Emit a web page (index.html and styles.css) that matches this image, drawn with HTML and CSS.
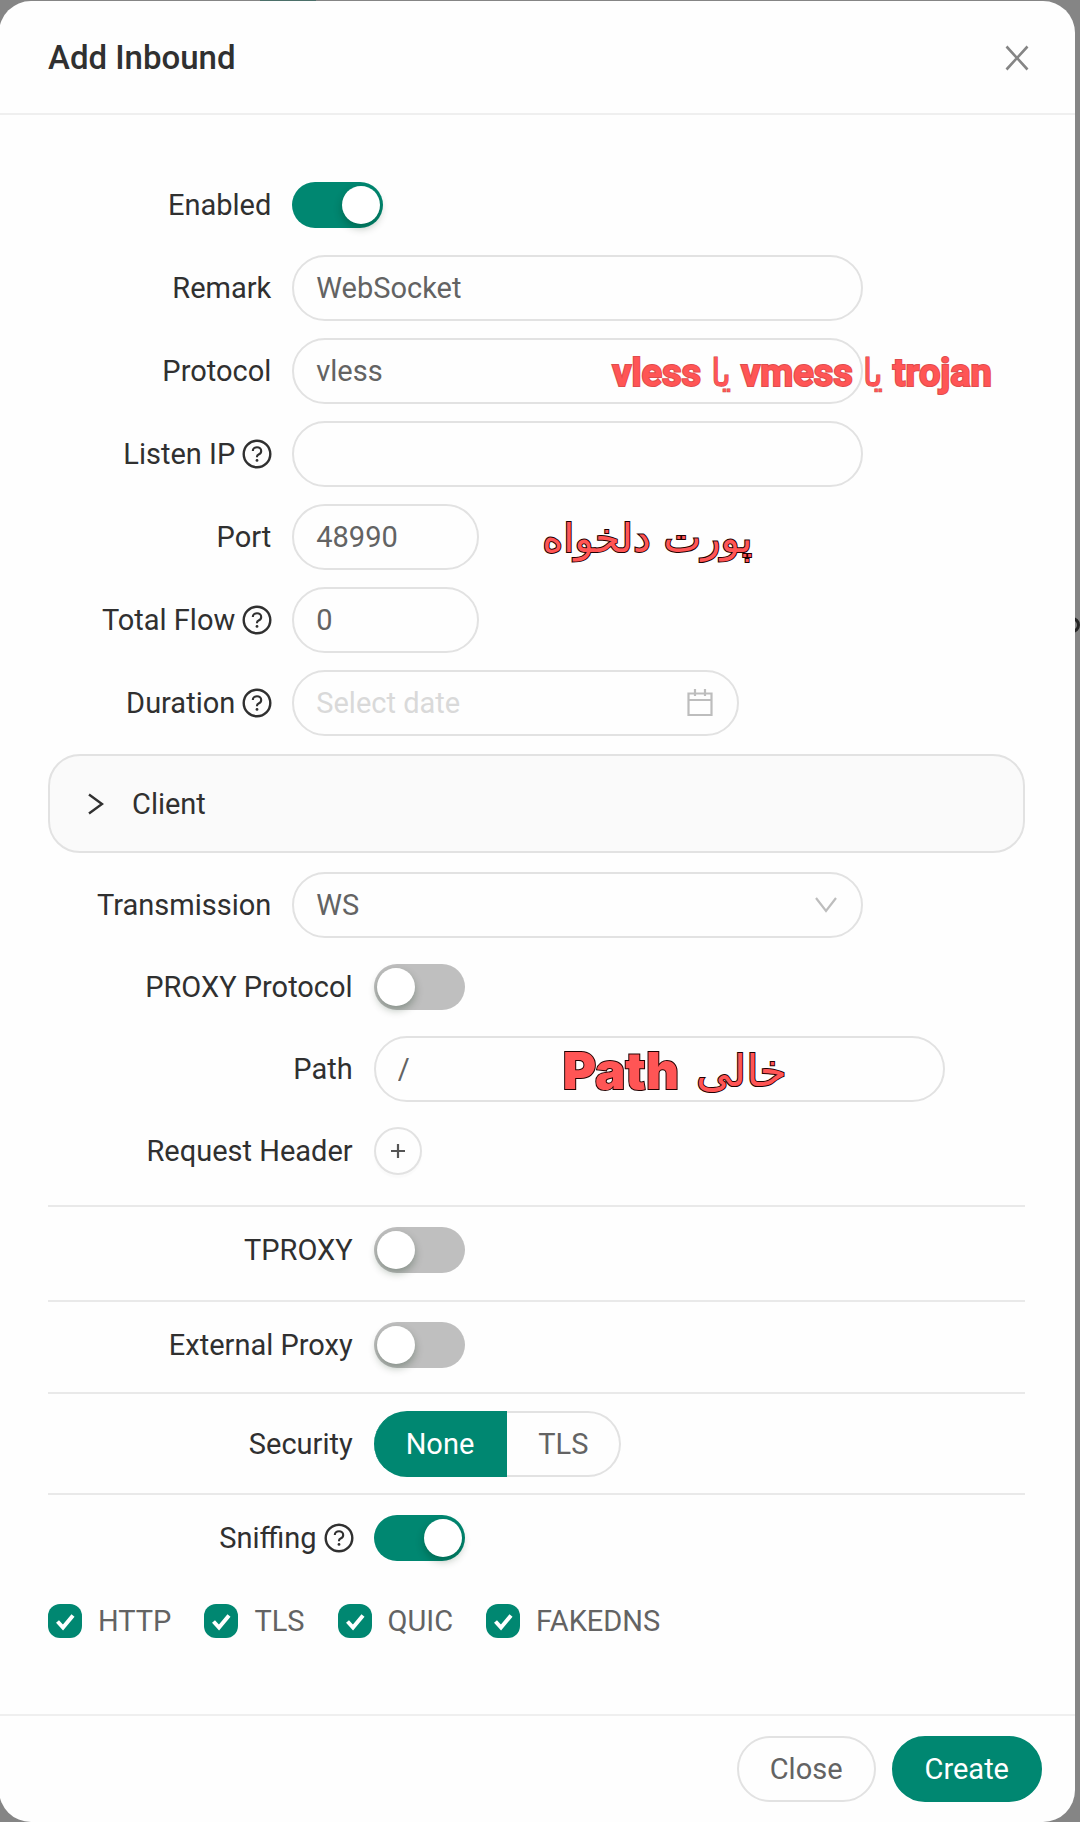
FILE: index.html
```html
<!DOCTYPE html>
<html lang="en">
<head>
<meta charset="utf-8">
<meta name="viewport" content="width=device-width, initial-scale=1">
<title>Add Inbound</title>
<link rel="stylesheet" href="styles.css">
</head>
<body>
<svg class="sprite" aria-hidden="true">
  <symbol id="help" viewBox="0 0 30 30"><circle cx="15" cy="15" r="13.3" fill="none" stroke="currentColor" stroke-width="2.4"/><path d="M10.8 12c0-2.2 1.8-3.8 4.2-3.8s4.2 1.6 4.2 3.8c0 1.7-1 2.8-2.6 3.5-1.1.5-1.6 1.1-1.6 2.3v.5" fill="none" stroke="currentColor" stroke-width="2.1"/><circle cx="15" cy="21.4" r="1.4" fill="currentColor"/></symbol>
</svg>
<div class="page-behind" aria-hidden="true"><span class="tab-edge"></span><span class="ring-edge"></span></div>
<main class="modal" role="dialog" aria-labelledby="title">
  <header class="modal-header">
    <h1 class="modal-title" id="title">Add Inbound</h1>
    <button class="icon-close" type="button" aria-label="Dismiss"><svg width="24" height="26" viewBox="0 0 24 26"><path d="M1.5 1.5 22.500 24.500M22.500 1.500 1.500 24.500" stroke="currentColor" stroke-width="2.600" fill="none"/></svg></button>
  </header>
  <form class="modal-body">
    <div class="group">
      <div class="row"><label class="label" for="enabled">Enabled</label><input class="switch" id="enabled" type="checkbox" role="switch" checked></div>
      <div class="row"><label class="label" for="remark">Remark</label><input class="field" id="remark" type="text" value="WebSocket"></div>
      <div class="row"><label class="label" for="protocol">Protocol</label>
        <div class="control"><select class="field" id="protocol"><option>vless</option></select>
        <p class="note note-protocol"><span>vless</span><span class="fa">یا</span><span>vmess</span><span class="fa">یا</span><span>trojan</span></p></div></div>
      <div class="row"><label class="label" for="listen">Listen IP <svg class="help"><use href="#help"/></svg></label><input class="field" id="listen" type="text"></div>
      <div class="row"><label class="label" for="port">Port</label>
        <div class="control"><input class="field field-short" id="port" type="text" inputmode="numeric" value="48990">
        <p class="note note-port" lang="fa" dir="rtl">پورت دلخواه</p></div></div>
      <div class="row"><label class="label" for="flow">Total Flow <svg class="help"><use href="#help"/></svg></label><input class="field field-short" id="flow" type="text" inputmode="numeric" value="0"></div>
      <div class="row"><label class="label" for="duration">Duration <svg class="help"><use href="#help"/></svg></label>
        <div class="control control-date"><input class="field" id="duration" type="text" placeholder="Select date">
        <svg class="field-icon" width="26" height="28" viewBox="0 0 26 28"><path d="M1.500 4.500h23v21.500h-23zM1.500 11h23M8 0v7M18 0v7" fill="none" stroke="currentColor" stroke-width="2.200"/></svg></div></div>
    </div>
    <button class="panel" type="button" aria-expanded="false"><svg width="16" height="22" viewBox="0 0 16 22"><path d="M1 1.500 14 11 1 20.500" fill="none" stroke="currentColor" stroke-width="2.400"/></svg>Client</button>
    <div class="group group-stream">
      <div class="row"><label class="label" for="transmission">Transmission</label>
        <div class="control"><select class="field" id="transmission"><option>WS</option></select>
        <svg class="field-icon" width="22" height="16" viewBox="0 0 22 16"><path d="M1 1 11 14 21 1" fill="none" stroke="currentColor" stroke-width="2.200"/></svg></div></div>
      <div class="row row-wide"><label class="label" for="proxy">PROXY Protocol</label><input class="switch" id="proxy" type="checkbox" role="switch"></div>
      <div class="row row-wide"><label class="label" for="path">Path</label>
        <div class="control"><input class="field" id="path" type="text" value="/">
        <p class="note note-path"><span>Path</span><span class="fa" lang="fa">خالی</span></p></div></div>
      <div class="row row-wide"><span class="label">Request Header</span><button class="add" type="button" aria-label="Add request header"><svg width="16" height="16" viewBox="0 0 16 16"><path d="M8 1v14M1 8h14" stroke="currentColor" stroke-width="2.200"/></svg></button></div>
    </div>
    <div class="section section-header"><div class="row row-wide row-slim"><label class="label" for="tproxy">TPROXY</label><input class="switch" id="tproxy" type="checkbox" role="switch"></div></div>
    <div class="section"><div class="row row-wide row-slim"><label class="label" for="external">External Proxy</label><input class="switch" id="external" type="checkbox" role="switch"></div></div>
    <div class="section section-security"><div class="row row-wide"><span class="label" id="security">Security</span>
      <div class="segmented" role="radiogroup" aria-labelledby="security">
        <label class="segment"><input type="radio" name="security" checked><span>None</span></label>
        <label class="segment"><input type="radio" name="security"><span>TLS</span></label>
      </div></div></div>
    <div class="section section-sniffing"><div class="row row-wide row-slim"><label class="label" for="sniffing">Sniffing <svg class="help"><use href="#help"/></svg></label><input class="switch" id="sniffing" type="checkbox" role="switch" checked></div></div>
    <div class="checks">
      <label class="check"><span class="box"><input type="checkbox" checked><svg viewBox="0 0 34 34"><path d="m9.500 17.500 5.500 6L25 11.500"/></svg></span>HTTP</label>
      <label class="check"><span class="box"><input type="checkbox" checked><svg viewBox="0 0 34 34"><path d="m9.500 17.500 5.500 6L25 11.500"/></svg></span>TLS</label>
      <label class="check"><span class="box"><input type="checkbox" checked><svg viewBox="0 0 34 34"><path d="m9.500 17.500 5.500 6L25 11.500"/></svg></span>QUIC</label>
      <label class="check"><span class="box"><input type="checkbox" checked><svg viewBox="0 0 34 34"><path d="m9.500 17.500 5.500 6L25 11.500"/></svg></span>FAKEDNS</label>
    </div>
  </form>
  <footer class="modal-footer">
    <button class="btn" type="button">Close</button>
    <button class="btn btn-primary" type="button">Create</button>
  </footer>
</main>
</body>
</html>
```
FILE: styles.css
```css
* { box-sizing: border-box; }
:root { --teal: #008771; --line: #e2e2e2; --ink: #303030; --value: #636363; }
body { margin: 0; background: #858585; color: var(--ink); font: 29px/40px Roboto, sans-serif; overflow-x: hidden; }
input, select, button { font: inherit; margin: 0; }
.sprite { position: absolute; width: 0; height: 0; }
svg { flex: none; }

.page-behind { position: absolute; inset: 0; overflow: hidden; }
.tab-edge { position: absolute; left: 260px; top: 0; width: 56px; height: 2px; background: #4b6f69; }
.ring-edge { position: absolute; right: 0; top: 617px; width: 16px; height: 16px; border: 3px solid #252525; border-radius: 8px; }

.modal { position: relative; margin: 1px 5px 1px -1px; padding-left: 1px; background: #fefefe; border-radius: 32px; overflow: hidden; }
.modal-header { display: flex; align-items: center; justify-content: space-between; height: 114px; padding: 1px 46px 0 48px; border-bottom: 2px solid #efefef; }
.modal-title { margin: 0; font-size: 33px; font-weight: 500; }
.icon-close { display: flex; padding: 0; border: 0; background: none; color: #858585; }
.modal-body { padding: 57px 50px 75px 48px; }

.group { display: grid; gap: 17px; }
.group-stream { gap: 16px; }
.row { display: grid; grid-template-columns: 25% minmax(0, 1fr); align-items: center; min-height: 66px; }
.row-wide { grid-template-columns: 33.333% minmax(0, 1fr); }
.row-slim { min-height: 46px; }
.label { display: flex; align-items: center; justify-content: flex-end; gap: 7px; padding-right: 21px; white-space: nowrap; }
.help { width: 30px; height: 30px; margin-right: -1px; }

.control { position: relative; width: 100%; max-width: 571px; }
.control-date { max-width: 447px; }
.field { display: block; width: 100%; max-width: 571px; height: 66px; padding: 0 22px; border: 2px solid var(--line); border-radius: 33px; background: #fefefe; color: var(--value); appearance: none; outline: 0; }
.field-short { width: 187px; }
.field::placeholder { color: #d9d9d9; opacity: 1; }
.field-icon { position: absolute; right: 26px; top: 50%; transform: translateY(-50%); color: #bdbdbd; }

.switch { appearance: none; display: flex; width: 91px; height: 46px; padding: 4px 3px; border-radius: 23px; background: #bfbfbf; }
.switch::before { content: ""; width: 38px; height: 38px; border-radius: 50%; background: #fff; box-shadow: 0 4px 8px rgba(0, 35, 11, .3); }
.switch:checked { justify-content: flex-end; background: var(--teal); }

.panel { display: flex; align-items: center; gap: 28px; width: 100%; height: 99px; margin: 18px 0 19px; padding: 0 38px; border: 2px solid var(--line); border-radius: 32px; background: #fafafa; color: var(--ink); }
.add { display: grid; place-items: center; width: 48px; height: 48px; padding: 0; border: 2px solid var(--line); border-radius: 50%; background: #fefefe; color: #555; box-shadow: 0 3px 2px rgba(0, 0, 0, .02); }

.section { padding: 20px 0 27px; border-top: 2px solid #e9e9e9; }
.section-header { margin-top: 21px; }
.section + .section { padding-bottom: 24px; }
.section.section-security { padding: 17px 0 16px; }
.section.section-sniffing { padding-bottom: 42px; }
.segmented { display: flex; }
.segment { display: flex; position: relative; }
.segment input { position: absolute; inset: 0; width: 100%; height: 100%; opacity: 0; }
.segment span { display: flex; align-items: center; height: 66px; padding: 0 31px; border: 2px solid var(--line); border-left: 0; color: var(--value); }
.segment:first-child span { border-radius: 33px 0 0 33px; padding: 0 31px 0 32px; }
.segment:last-child span { border-radius: 0 33px 33px 0; }
.segment input:checked + span { border-color: var(--teal); background: var(--teal); color: #fff; }

.checks { display: flex; gap: 33px; }
.check { display: flex; align-items: center; gap: 16px; height: 36px; color: var(--value); }
.box { display: grid; width: 34px; height: 34px; }
.box input, .box svg { grid-area: 1 / 1; width: 34px; height: 34px; }
.box input { appearance: none; border-radius: 12px; }
.box input:checked { background: var(--teal); }
.box path { fill: none; stroke: #fff; stroke-width: 4; }

.modal-footer { display: flex; justify-content: flex-end; gap: 16px; padding: 20px 33px 20px; border-top: 2px solid #efefef; }
.btn { height: 66px; padding: 0 31px; border: 2px solid var(--line); border-radius: 33px; background: #fefefe; color: var(--value); }
.btn-primary { border-color: var(--teal); background: var(--teal); color: #fff; }

.note { position: absolute; display: flex; align-items: center; margin: 0; color: #ff5555; white-space: nowrap; pointer-events: none; paint-order: stroke fill; }
.note-protocol { left: 320px; top: 13px; gap: 10px; font: bold 38px/44px Roboto, sans-serif; -webkit-text-stroke: 2px #e04c4c; }
.note-protocol .fa { font: 38px/44px "DejaVu Sans Condensed", "DejaVu Sans", sans-serif; -webkit-text-stroke: 1px #c44; }
.note-port { left: 250px; top: 9px; font: 40px/50px "DejaVu Sans", sans-serif; -webkit-text-stroke: 2px #200; }
.note-path { left: 189px; top: 7px; gap: 17px; font: 900 51px/56px Inter, sans-serif; -webkit-text-stroke: 2px #200; }
.note-path .fa { font: 44px/50px "DejaVu Sans", sans-serif; }
```
